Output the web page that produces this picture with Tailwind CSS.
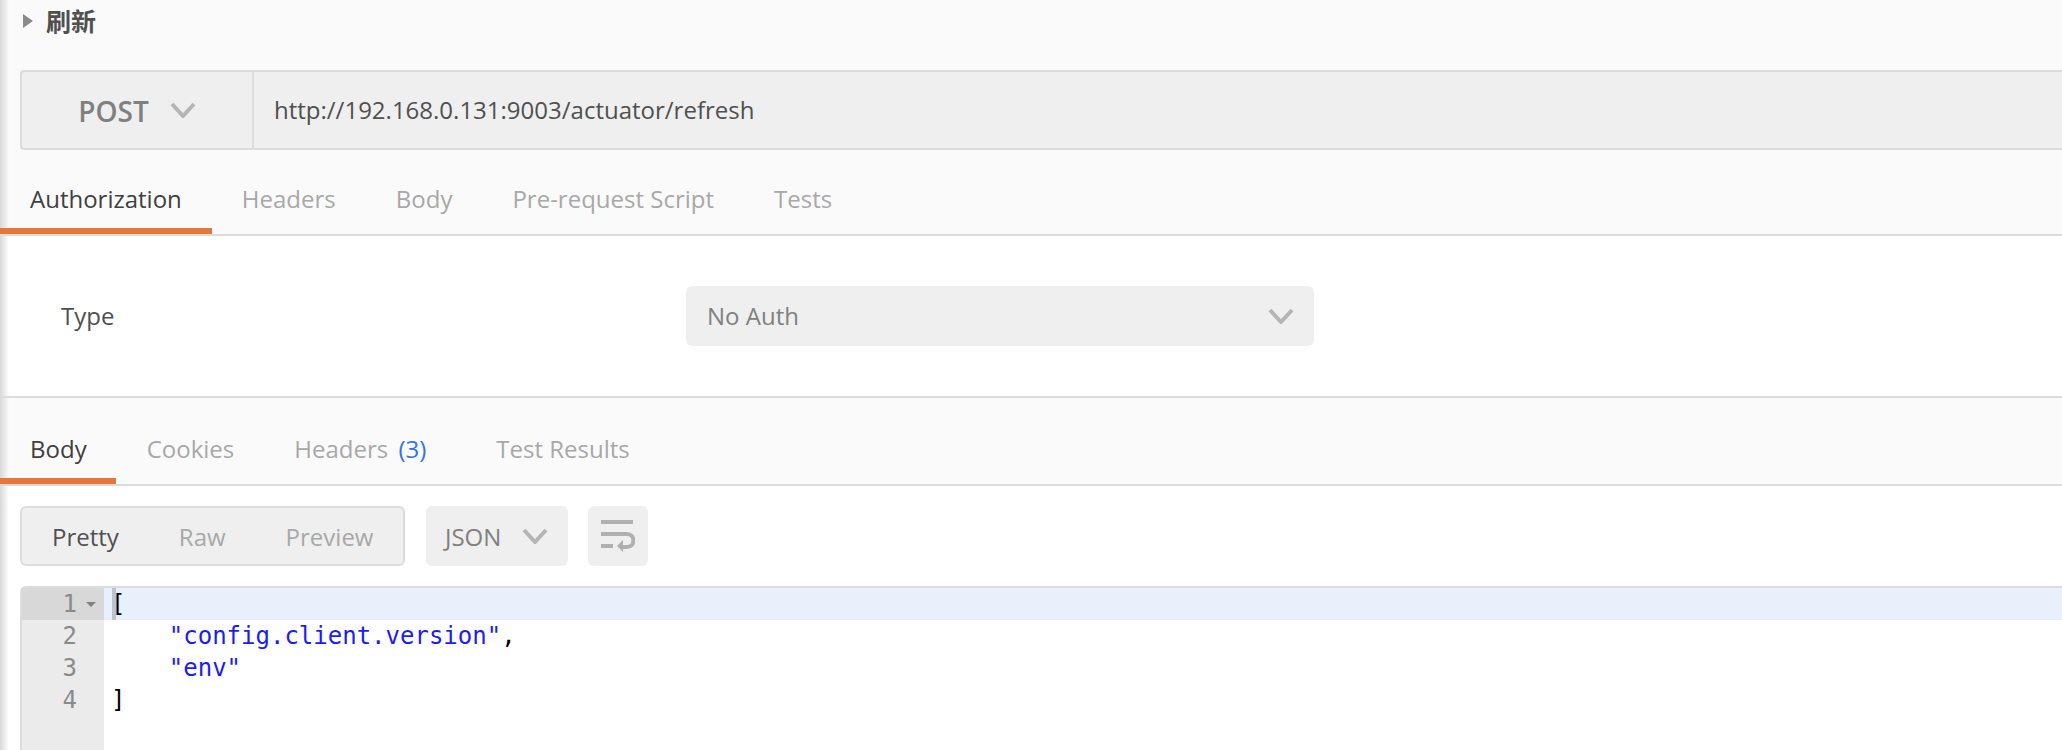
<!DOCTYPE html>
<html lang="en">
<head>
    <meta charset="UTF-8">
    <title>刷新</title>
    <script src="https://cdn.jsdelivr.net/npm/@tailwindcss/browser@4"></script>
</head>
<body class="bg-[#fafafa] font-['Open_Sans',sans-serif] overflow-hidden">
    <div class="relative h-[750px] w-[2062px] overflow-hidden flex flex-col">
        <!-- left edge shadow -->
        <div class="absolute left-0 top-0 bottom-0 w-[9px] bg-gradient-to-r from-[#d8d8d8] to-transparent z-10"></div>

        <!-- Request title -->
        <div class="h-[70px] flex items-start pt-[5px] pl-[23px]">
            <svg class="mt-[9px] w-[10px] h-[14px]" viewBox="0 0 10 14"><path d="M0 0L10 7L0 14Z" fill="#8a8a8a"/></svg>
            <span class="ml-[13px] text-[25px] leading-[30px] font-bold text-[#505050] font-['Noto_Sans_CJK_SC',sans-serif]">刷新</span>
        </div>

        <!-- URL bar -->
        <div class="ml-[20px] h-[80px] flex bg-[#efefef] border-2 border-r-0 border-[#dcdcdc] rounded-l-[4px]">
            <div class="w-[232px] flex items-center justify-center border-r-2 border-[#dcdcdc] shrink-0">
                <span class="text-[28px] leading-[38px] pt-[2px] font-semibold text-[#808080]">POST</span>
                <svg class="ml-[21px] w-[26px] h-[16px]" viewBox="0 0 26 16"><path d="M2 2L13 14L24 2" fill="none" stroke="#b5b5b5" stroke-width="4"/></svg>
            </div>
            <div class="flex items-center pl-[20px] text-[24px] text-[#505050]">http://192.168.0.131:9003/actuator/refresh</div>
        </div>

        <!-- Request tabs -->
        <div class="relative z-20 h-[86px] flex items-end border-b-2 border-[#dcdcdc] text-[24px] leading-[32px] text-[#a8a8a8]">
            <div class="h-[64px] px-[30px] pt-[13px] border-b-[6px] border-[#e67639] text-[#404040]">Authorization</div>
            <div class="h-[64px] px-[30px] pt-[13px]">Headers</div>
            <div class="h-[64px] px-[30px] pt-[13px]">Body</div>
            <div class="h-[64px] px-[30px] pt-[13px]">Pre-request Script</div>
            <div class="h-[64px] px-[30px] pt-[13px]">Tests</div>
        </div>

        <!-- Auth panel -->
        <div class="h-[160px] bg-white flex items-center pl-[61px] text-[24px] leading-[32px]">
            <span class="w-[625px] text-[#505050]">Type</span>
            <div class="w-[628px] h-[60px] bg-[#efefef] rounded-[6px] flex items-center justify-between pl-[21px] pr-[20px] text-[#808080]">
                <span>No Auth</span>
                <svg class="w-[26px] h-[16px]" viewBox="0 0 26 16"><path d="M2 2L13 14L24 2" fill="none" stroke="#b5b5b5" stroke-width="4"/></svg>
            </div>
        </div>

        <!-- Response tabs -->
        <div class="relative z-20 h-[90px] border-t-2 border-b-2 border-[#dcdcdc] flex items-end text-[24px] leading-[32px] text-[#a8a8a8]">
            <div class="h-[64px] pl-[30px] pr-[29px] pt-[13px] border-b-[6px] border-[#e67639] text-[#404040]">Body</div>
            <div class="h-[64px] pl-[31px] pr-[30px] pt-[13px]">Cookies</div>
            <div class="h-[64px] pl-[30px] pr-[40px] pt-[13px]">Headers <span class="ml-[4px] text-[#2f76e8]">(3)</span></div>
            <div class="h-[64px] px-[30px] pt-[13px]">Test Results</div>
        </div>

        <!-- Response body -->
        <div class="flex-1 bg-white flex flex-col">
            <div class="pl-[20px] pt-[20px] flex text-[24px] leading-[32px]">
                <div class="w-[385px] h-[60px] pt-[1px] bg-[#efefef] border-2 border-[#dcdcdc] rounded-[6px] flex items-center text-[#a8a8a8]">
                    <span class="px-[30px] text-[#505050]">Pretty</span>
                    <span class="px-[30px]">Raw</span>
                    <span class="px-[30px]">Preview</span>
                </div>
                <div class="ml-[21px] w-[142px] h-[60px] bg-[#efefef] rounded-[6px] flex items-center pl-[19px] text-[#808080]">
                    <span class="pt-[1px]">JSON</span>
                    <svg class="ml-[21px] w-[26px] h-[16px]" viewBox="0 0 26 16"><path d="M2 2L13 14L24 2" fill="none" stroke="#b5b5b5" stroke-width="4"/></svg>
                </div>
                <div class="ml-[20px] w-[60px] h-[60px] bg-[#efefef] rounded-[6px] flex items-center justify-center">
                    <svg class="w-[34px] h-[32px]" viewBox="0 0 34 32" fill="none" stroke="#b0b0b0" stroke-width="4">
                        <path d="M0 2H32"/>
                        <path d="M0 14H26C34.500 14 34.500 27 26 27H21"/>
                        <path d="M0 26H12"/>
                        <path d="M22 20V32L16 26Z" fill="#b0b0b0" stroke="none"/>
                    </svg>
                </div>
            </div>

            <div class="ml-[20px] mt-[20px] flex-1 flex border-t-2 border-l-2 border-[#dcdcdc] rounded-tl-[6px] font-['DejaVu_Sans_Mono',monospace] text-[24px] leading-[32px] text-[#8a8a8a]">
                <!-- gutter -->
                <div class="w-[82px] bg-[#ebebeb] shrink-0">
                    <div class="h-[32px] bg-[#d8d8d8] flex justify-end pr-[8px]"><span>1</span><svg class="ml-[9px] mt-[14px] w-[10px] h-[5px]" viewBox="0 0 10 5"><path d="M0 0H10L5 5Z" fill="#808080"/></svg></div>
                    <div class="h-[32px] text-right pr-[27px]">2</div>
                    <div class="h-[32px] text-right pr-[27px]">3</div>
                    <div class="h-[32px] text-right pr-[27px]">4</div>
                </div>
                <!-- code -->
                <div class="relative flex-1 text-black">
                    <div class="absolute left-[8px] top-0 w-[4px] h-[32px] bg-[#b8c4d0]"></div>
                    <div class="h-[32px] bg-[#e8f0fb] pl-[7px]">[</div>
                    <div class="h-[32px] pl-[7px] whitespace-pre">    <span class="text-[#1c1cf5]">"config.client.version"</span>,</div>
                    <div class="h-[32px] pl-[7px] whitespace-pre text-[#1c1cf5]">    "env"</div>
                    <div class="h-[32px] pl-[7px]">]</div>
                </div>
            </div>
        </div>
    </div>
</body>
</html>
